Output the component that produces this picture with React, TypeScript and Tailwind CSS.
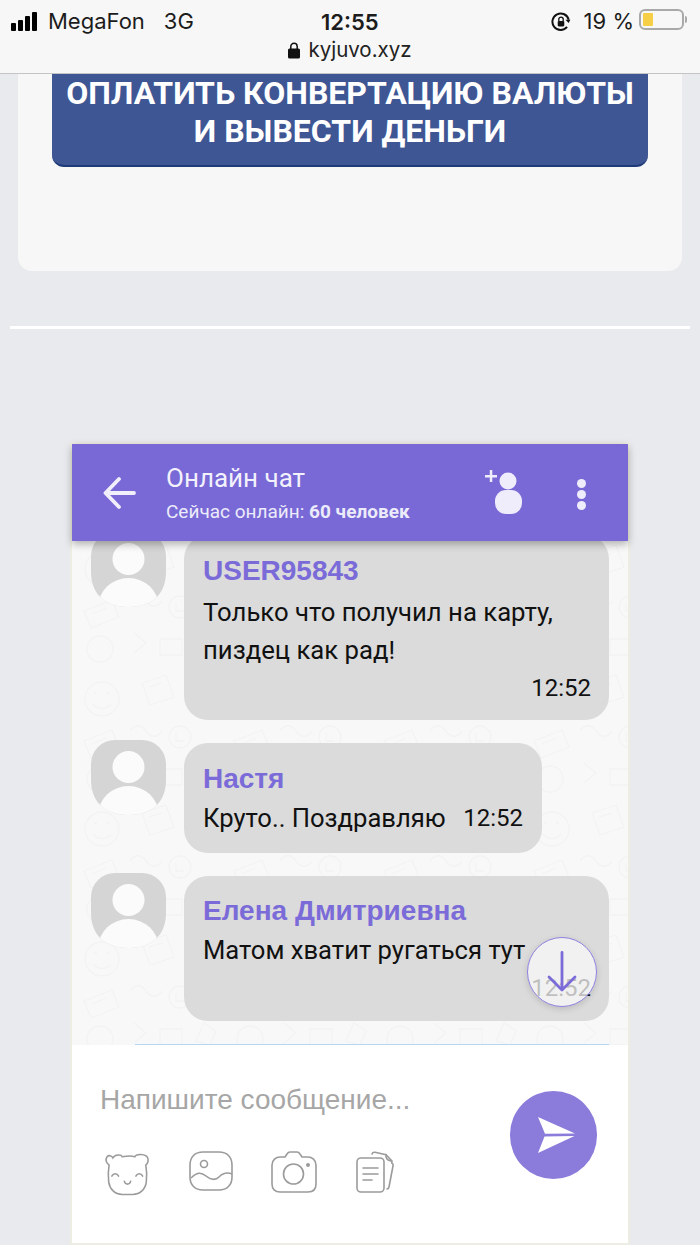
import React from 'react';

const Doodles = () => (
  <svg className="absolute inset-0 w-full h-full" fill="none" stroke="#f3f3f3" strokeWidth="1.300">
    <defs>
      <pattern id="doodle" width="150" height="130" patternUnits="userSpaceOnUse">
        <circle cx="30" cy="28" r="17" />
        <path d="M22 22h3M34 22h3M21 33c5 6 13 6 18 0" />
        <path d="M70 12l24-8 8 22-24 8zM77 16l13-4" />
        <path d="M120 20c8-8 20-6 24 3M124 32h16" />
        <circle cx="108" cy="66" r="11" />
        <path d="M104 62v8h8" />
        <path d="M12 70l28-11 7 17-28 11zM20 73l14-6" />
        <path d="M58 60c5-7 11-7 16 0s11 7 16 0" />
        <path d="M62 92l12 10-12 10M88 98h22v16H88z" />
        <circle cx="28" cy="108" r="13" />
        <path d="M132 92l12 8-6 14-14-4zM118 122h20" />
      </pattern>
    </defs>
    <rect width="100%" height="100%" fill="url(#doodle)" stroke="none" />
  </svg>
);

const Avatar = () => (
  <svg className="shrink-0" width="75" height="75" viewBox="0 0 75 75">
    <defs>
      <clipPath id="av">
        <path d="M24 0h27a24 24 0 0 1 24 24v16c0 18-10 35-37.500 35S0 58 0 40V24A24 24 0 0 1 24 0z" />
      </clipPath>
    </defs>
    <g clipPath="url(#av)">
      <rect width="75" height="75" fill="#d5d5d5" />
      <circle cx="37.500" cy="27" r="16" fill="#fbfbfb" />
      <ellipse cx="37.500" cy="74" rx="30" ry="28" fill="#fbfbfb" />
    </g>
  </svg>
);

const Bear = () => (
  <svg width="51" height="46" viewBox="0 0 46 44" fill="none" stroke="#9b9b9b" strokeWidth="1.500" strokeLinecap="round">
    <path d="M9 7.500C11 4 17 4 18 6.500c6-1.200 9-1.200 12 0C31 3.500 41 3 42.500 8c.8 3-1 5.500-2 6.500 1 5 1 11 .5 16-.8 7-6 12-13 12H18c-7 0-12-5-13-12-.6-5-.5-11 .4-16C3 12.500 1.500 9.500 3.500 6.500 5 4.500 8 5.500 9 7.500z" />
    <path d="M8 25c1.500-3 5-3 6.500 0M31 25c1.500-3 5-3 6.500 0M20 30c1 3.500 5 3.500 6 0" />
  </svg>
);

const Picture = () => (
  <svg width="44" height="40" viewBox="0 0 44 40" fill="none" stroke="#9b9b9b" strokeWidth="1.600">
    <path d="M14 1h16c8 0 13 5 13 13v12c0 8-5 13-13 13H14C6 39 1 34 1 26V14C1 6 6 1 14 1z" />
    <circle cx="15" cy="13" r="3.500" />
    <path d="M2 27c6-6 10-6 15-2s9 5 13 1 8-5 13-3" />
  </svg>
);

const Camera = () => (
  <svg width="48" height="42" viewBox="0 0 46 42" fill="none" stroke="#9b9b9b" strokeWidth="1.600">
    <path d="M14 6l2-3c.8-1.300 1.500-2 3-2h7c1.500 0 2.200.7 3 2l2 3h6c4 0 8 3 8 8v19c0 5-3 8-8 8H9c-5 0-8-3-8-8V14c0-5 4-8 8-8z" />
    <circle cx="22.500" cy="23" r="10" />
    <circle cx="37" cy="14" r="1.200" fill="#9b9b9b" />
  </svg>
);

const Docs = () => (
  <svg width="42" height="42" viewBox="0 0 42 42" fill="none" stroke="#9b9b9b" strokeWidth="1.600" strokeLinecap="round">
    <rect x="1" y="7" width="27" height="34" rx="4" />
    <path d="M16 3c.5-1.500 1.500-2 3-1.700l11 2.400 6 6.300-.2 2c1 .5 1.500 1.500 1.200 3l-4 21c-.3 1.500-1 2-2 2" />
    <path d="M30 3.500c-.5 3 1 6 5 6.500" />
    <path d="M7 17h15M7 23h15M7 29h9" />
  </svg>
);

const Message = ({ name, text, time, narrow }: any) => (
  <div className="flex gap-[18px] items-start">
    <div className="-mt-[3px]">
      <Avatar />
    </div>
    <div className={`bg-[#dbdbdb] rounded-[24px] pl-[19px] pr-[19px] ${narrow ? 'w-[358px]' : 'w-[425px]'}`}>
      {name}
      {text}
      {time}
    </div>
  </div>
);

const Name = ({ children }: any) => (
  <div className="font-['Liberation_Sans',sans-serif] font-bold text-[28px] leading-[32px] text-[#7a6bd8]">{children}</div>
);

export default function App() {
  return (
    <div className="w-[700px] h-[1245px] overflow-hidden bg-[#e9eaee] font-['Roboto',sans-serif]">
      {/* browser status bar */}
      <header className="h-[74px] bg-[#f7f7f7] border-b border-[#c4c4c4] text-[#1c1c1c] flex flex-col">
        <div className="h-[38px] pt-[5px] px-[11px] flex items-center justify-between relative">
          <div className="flex items-center">
            <div className="flex items-end gap-[2px] h-[19px]">
              <span className="w-[5px] h-[8px] bg-black rounded-[1px]" />
              <span className="w-[5px] h-[11px] bg-black rounded-[1px]" />
              <span className="w-[5px] h-[15px] bg-black rounded-[1px]" />
              <span className="w-[5px] h-[19px] bg-black rounded-[1px]" />
            </div>
            <span className="ml-[11px] text-[22px] font-['Inter',sans-serif]">MegaFon</span>
            <span className="ml-[19px] text-[22px] font-['Inter',sans-serif]">3G</span>
          </div>
          <div className="absolute left-[321px] top-[6px] text-[22px] font-semibold font-['Inter',sans-serif]">12:55</div>
          <div className="flex items-center">
            <svg width="20" height="22" viewBox="0 0 17 20" fill="none" className="mr-[13px]">
              <path d="M14 14.500A7.500 7.500 0 1 1 15.500 8" stroke="#111" strokeWidth="1.800" />
              <path d="M12.500 8l3 3 1.500-3z" fill="#111" />
              <rect x="5.500" y="9" width="6" height="5" rx="1" fill="#111" />
              <path d="M6.500 9V7.500a2 2 0 0 1 4 0V9" stroke="#111" strokeWidth="1.200" />
            </svg>
            <span className="text-[22px] font-['Inter',sans-serif]">19 %</span>
            <div className="w-[55px] h-[20px]"></div>
          </div>
          <div className="absolute left-[639px] top-[9px] w-[45px] h-[21px] border-2 border-[#a9a9a9] rounded-[6px] p-[2px]">
            <div className="w-[10px] h-full bg-[#f7cf47] rounded-[1px]" />
          </div>
          <span className="absolute left-[685px] top-[16px] w-[2px] h-[7px] bg-[#a9a9a9] rounded-r" />
        </div>
        <div className="flex-1 flex items-center justify-center gap-[8px] pb-[10px] text-[#222]">
          <svg width="12" height="17" viewBox="0 0 12 17">
            <rect x="0" y="6.500" width="12" height="10" rx="1.500" fill="#111" />
            <path d="M2.800 7V4.500a3.200 3.200 0 0 1 6.400 0V7" fill="none" stroke="#111" strokeWidth="1.500" />
          </svg>
          <span className="text-[20.500px] font-['Inter',sans-serif] leading-none">kyjuvo.xyz</span>
        </div>
      </header>

      {/* payment card */}
      <section className="mx-[18px] h-[197px] bg-[#f7f7f7] rounded-b-[14px] px-[34px]">
        <button className="w-full h-[93px] flex flex-col justify-start bg-[#3e5694] border-b-2 border-[#1f3a78] rounded-b-[12px] text-white text-[32px] leading-[38px] font-bold text-center uppercase">
          <span className="block">Оплатить конвертацию валюты</span>
          <span className="block">и вывести деньги</span>
        </button>
      </section>

      <div className="mt-[55px] mx-[10px] h-[3px] bg-white" />

      {/* chat widget */}
      <section className="mt-[115px] mx-[72px] h-[799px] flex flex-col shadow-[0_0_0_2px_#eeede3]">
        <div className="relative z-10 h-[97px] shrink-0 bg-[#7869d6] shadow-[0_3px_8px_rgba(0,0,0,0.3)] flex items-center text-white pl-[31px] pr-[42px]">
          <svg width="34" height="34" viewBox="0 0 34 34" fill="none" stroke="#f1effb" strokeWidth="3.800" strokeLinecap="round" strokeLinejoin="round">
            <path d="M31 17H3M16 3L2.500 17 16 31" />
          </svg>
          <div className="ml-[29px] flex-1">
            <div className="text-[26px] leading-[32px] text-[#f3f1fc]">Онлайн чат</div>
            <div className="text-[19px] leading-[22px] mt-[7px] text-[#ecebfa]">
              Сейчас онлайн: <span className="font-bold">60 человек</span>
            </div>
          </div>
          <svg width="37" height="46" viewBox="0 0 37 46" className="mr-[55px]" fill="#efedfb">
            <circle cx="23" cy="11" r="8.500" />
            <rect x="10" y="20" width="27" height="24" rx="11" />
            <path d="M0 5h12v2.500H0zM4.800 0h2.500v12H4.800z" />
          </svg>
          <div className="flex flex-col gap-[2px] mt-[3px]">
            <span className="w-[9px] h-[9px] rounded-full bg-[#efedfb]" />
            <span className="w-[9px] h-[9px] rounded-full bg-[#efedfb]" />
            <span className="w-[9px] h-[9px] rounded-full bg-[#efedfb]" />
          </div>
        </div>

        <div className="relative h-[504px] shrink-0 overflow-hidden bg-[#f8f8f8] pl-[19px]">
          <Doodles />
          <div className="relative -mt-[6px] flex flex-col gap-[23px]">
            <Message
              name={<div className="pt-[20px]"><Name>USER95843</Name></div>}
              text={<div className="text-[25.700px] leading-[38px] text-[#111] mt-[6px]">Только что получил на карту,<br />пиздец как рад!</div>}
              time={<div className="text-right text-[24px] leading-[30px] text-[#111] pt-[4px] pb-[17px] -mr-[1px]">12:52</div>}
            />
            <Message
              narrow
              name={<div className="pt-[20px]"><Name>Настя</Name></div>}
              text={
                <div className="flex justify-between text-[25.600px] leading-[39px] text-[#111] pt-[4px] pb-[15px]">
                  <span>Круто.. Поздравляю</span>
                  <span className="text-[24px]">12:52</span>
                </div>
              }
            />
            <Message
              name={<div className="pt-[19px]"><Name>Елена Дмитриевна</Name></div>}
              text={<div className="text-[25.600px] leading-[39px] text-[#111] mt-[4px]">Матом хватит ругаться тут</div>}
              time={<div className="text-right text-[24px] leading-[30px] text-[#111] pt-[3px] pb-[18px] -mr-[1px]">12:52</div>}
            />
            <div className="ml-[44px] mr-[19px] h-[20px] border-t-2 border-[#b5d5f3]" />
          </div>
          <button className="absolute left-[455px] top-[396px] w-[70px] h-[70px] rounded-full bg-[#f8f8f8]/75 border border-[#8d80e0] shadow-[0_2px_6px_rgba(0,0,0,0.15)] flex items-center justify-center">
            <svg width="30" height="42" viewBox="0 0 30 42" fill="none" stroke="#7a6bd8" strokeWidth="2.800" strokeLinecap="round" strokeLinejoin="round">
              <path d="M15 1.500v37M2 26l13 13 13-13" />
            </svg>
          </button>
        </div>

        <div className="flex-1 bg-white relative z-10 pl-[28px] pr-[31px] flex justify-between">
          <div>
            <div className="pt-[37px] text-[28px] leading-[36px] text-[#a6a6a6] font-['Liberation_Sans',sans-serif]">Напишите сообщение...</div>
            <div className="mt-[32px] flex items-start">
              <div className="ml-[2px]"><Bear /></div>
              <div className="ml-[36px] mt-[1px]"><Picture /></div>
              <div className="ml-[37px] mt-[1px]"><Camera /></div>
              <div className="ml-[38px] mt-[1px]"><Docs /></div>
            </div>
          </div>
          <div className="mt-[46px] w-[87px] h-[88px] rounded-full bg-[#8b7cdc] flex items-center justify-center">
            <svg width="38" height="36" viewBox="0 0 38 36" fill="#fff" className="ml-[4px]">
              <path d="M1 0l37 16.500-30 .3z" />
              <path d="M7.500 19.500l30-.5L1 36z" />
            </svg>
          </div>
        </div>
      </section>
    </div>
  );
}
